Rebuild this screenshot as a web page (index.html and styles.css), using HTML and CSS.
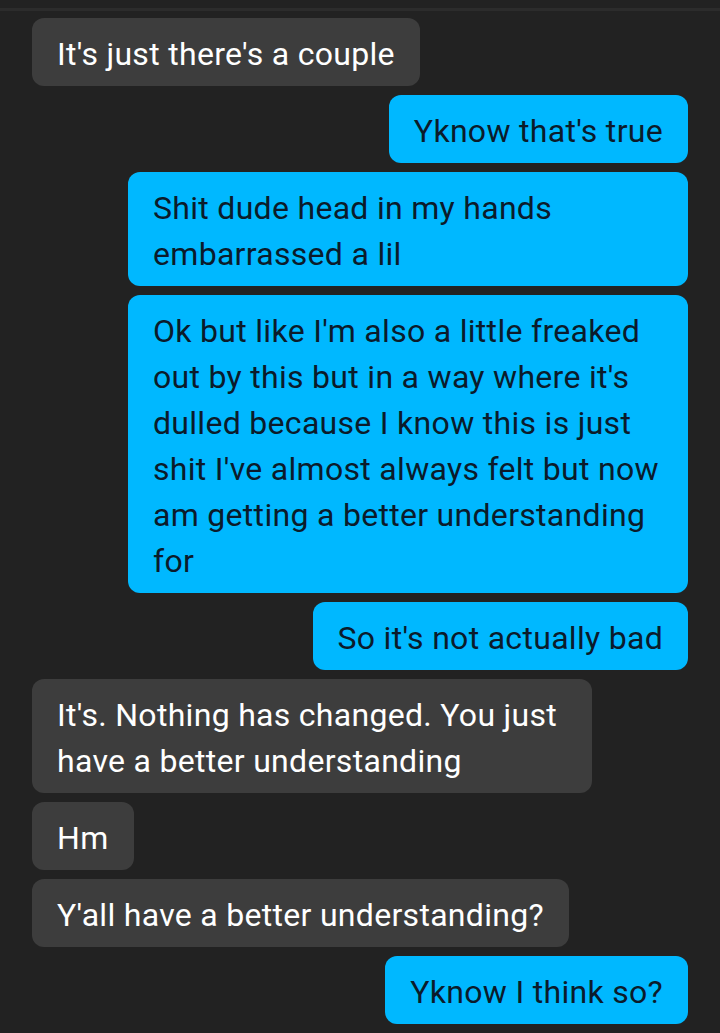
FILE: index.html
```
<!DOCTYPE html>
<html lang="en">
<head>
    <meta charset="UTF-8">
    <meta name="viewport" content="width=device-width, initial-scale=1.0">
    <title>Messages</title>
    <link rel="stylesheet" href="styles.css">
</head>
<body>
    <div class="top-line"></div>
    <div class="thread">
        <div class="msg theirs">It's just there's a couple</div>
        <div class="msg mine">Yknow that's true</div>
        <div class="msg mine">Shit dude head in my hands embarrassed a lil</div>
        <div class="msg mine">Ok but like I'm also a little freaked out by this but in a way where it's dulled because I know this is just shit I've almost always felt but now am getting a better understanding for</div>
        <div class="msg mine">So it's not actually bad</div>
        <div class="msg theirs">It's. Nothing has changed. You just have a better understanding</div>
        <div class="msg theirs">Hm</div>
        <div class="msg theirs">Y'all have a better understanding?</div>
        <div class="msg mine">Yknow I think so?</div>
    </div>
</body>
</html>
```

FILE: styles.css
```
body {
    margin: 0;
    padding: 0;
    background-color: #222222;
    font-family: Roboto, "Liberation Sans", sans-serif;
    height: 100vh;
    overflow: hidden;
}
.top-line {
    height: 3px;
    margin-top: 8px;
    background-color: #2c2c2c;
}
.thread {
    display: flex;
    flex-direction: column;
    gap: 9px;
    padding: 7px 32px 0 32px;
}
.msg {
    max-width: 560px;
    box-sizing: border-box;
    padding: 13px 25px 9px 25px;
    border-radius: 12px;
    font-size: 32px;
    line-height: 46px;
    letter-spacing: 0.3px;
}
.theirs {
    align-self: flex-start;
    background-color: #3d3d3d;
    color: #ffffff;
}
.mine {
    align-self: flex-end;
    background-color: #00b8ff;
    color: #0b1b2b;
}
```
